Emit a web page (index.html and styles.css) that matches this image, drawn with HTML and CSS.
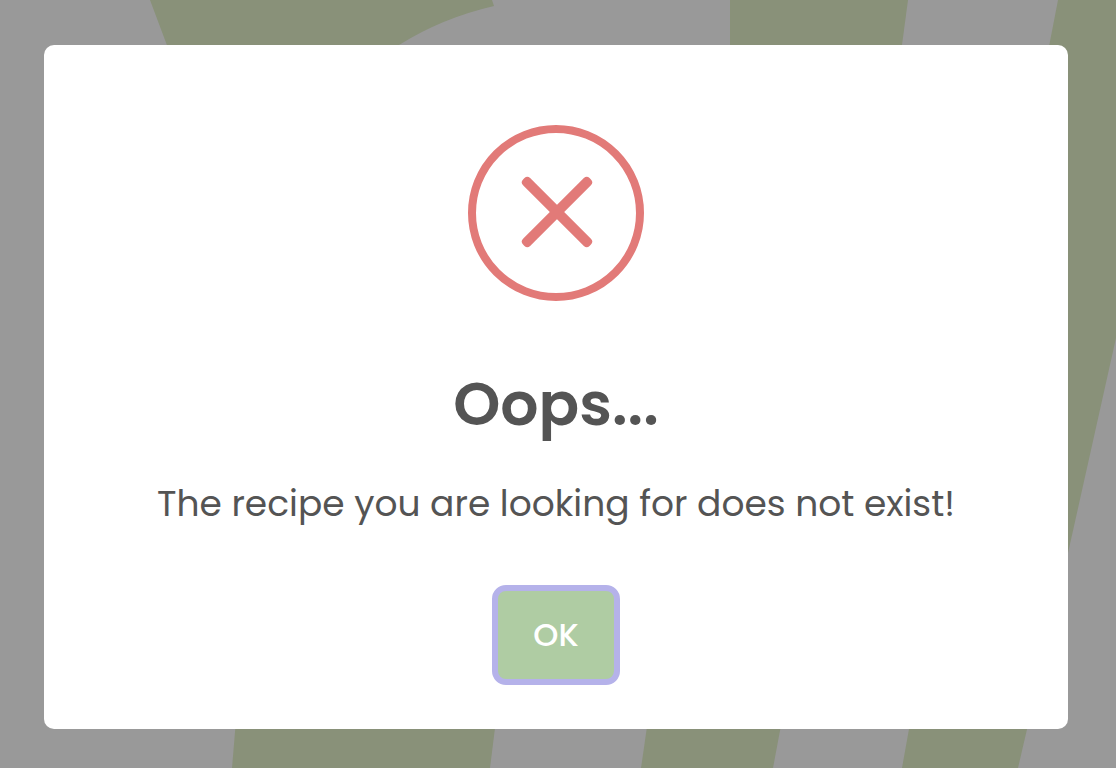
FILE: index.html
```html
<!DOCTYPE html>
<html lang="en">
<head>
<meta charset="utf-8">
<meta name="viewport" content="width=device-width, initial-scale=1">
<title>Recipe not found</title>
<link rel="stylesheet" href="styles.css">
</head>
<body>
<svg class="backdrop" viewBox="0 0 1116 768" preserveAspectRatio="none" aria-hidden="true">
  <path d="M150 0H492L494 6Q442 18 399 45L300 120H195Z"/>
  <path d="M730 0H908L902 45L860 300H730Z"/>
  <path d="M1058 0H1116V338L1068 553L1018 768H902L909 729L1000 300Z"/>
  <path d="M236 720H496L490 768H232Z"/>
  <path d="M648 720H782L773 768H641Z"/>
</svg>
<main class="overlay">
  <section class="dialog" role="alertdialog" aria-modal="true" aria-labelledby="title" aria-describedby="message">
    <svg class="dialog-icon" viewBox="0 0 176 176" aria-hidden="true">
      <circle cx="88" cy="88" r="84"/>
      <rect x="42" y="82" width="94" height="10" rx="4" transform="rotate(45 89 87)"/>
      <rect x="42" y="82" width="94" height="10" rx="4" transform="rotate(-45 89 87)"/>
    </svg>
    <h1 class="dialog-title" id="title">Oops...</h1>
    <p class="dialog-message" id="message">The recipe you are looking for does not exist!</p>
    <button class="dialog-confirm" type="button">OK</button>
  </section>
</main>
</body>
</html>
```
FILE: styles.css
```css
* {
  box-sizing: border-box;
}

body {
  margin: 0;
  background: #999999;
  color: #545454;
  font-family: Poppins, Inter, sans-serif;
}

.backdrop {
  position: fixed;
  inset: 0;
  z-index: -1;
  width: 100%;
  height: 100%;
  fill: #899179;
}

.overlay {
  display: flex;
  align-items: center;
  justify-content: center;
  min-height: 100vh;
  padding: 45px 48px 39px 44px;
}

.dialog {
  display: flex;
  flex-direction: column;
  align-items: center;
  width: 100%;
  max-width: 1024px;
  padding: 80px 32px 44px;
  border-radius: 10px;
  background: #ffffff;
  text-align: center;
}

.dialog-icon {
  width: 176px;
  height: 176px;
}

.dialog-icon circle {
  fill: none;
  stroke: #e27a78;
  stroke-width: 8px;
}

.dialog-icon rect {
  fill: #e27a78;
}

.dialog-title {
  margin: 64px 0 0;
  font-size: 60px;
  font-weight: 600;
  line-height: 78px;
}

.dialog-message {
  margin: 30px 0 0;
  font-size: 36px;
  line-height: 62px;
}

.dialog-confirm {
  margin: 50px 0 0;
  width: 128px;
  height: 100px;
  border: 6px solid #b5b2ea;
  border-radius: 14px;
  background: #afcca3;
  color: #ffffff;
  font: inherit;
  font-size: 32px;
  font-weight: 500;
}
```
